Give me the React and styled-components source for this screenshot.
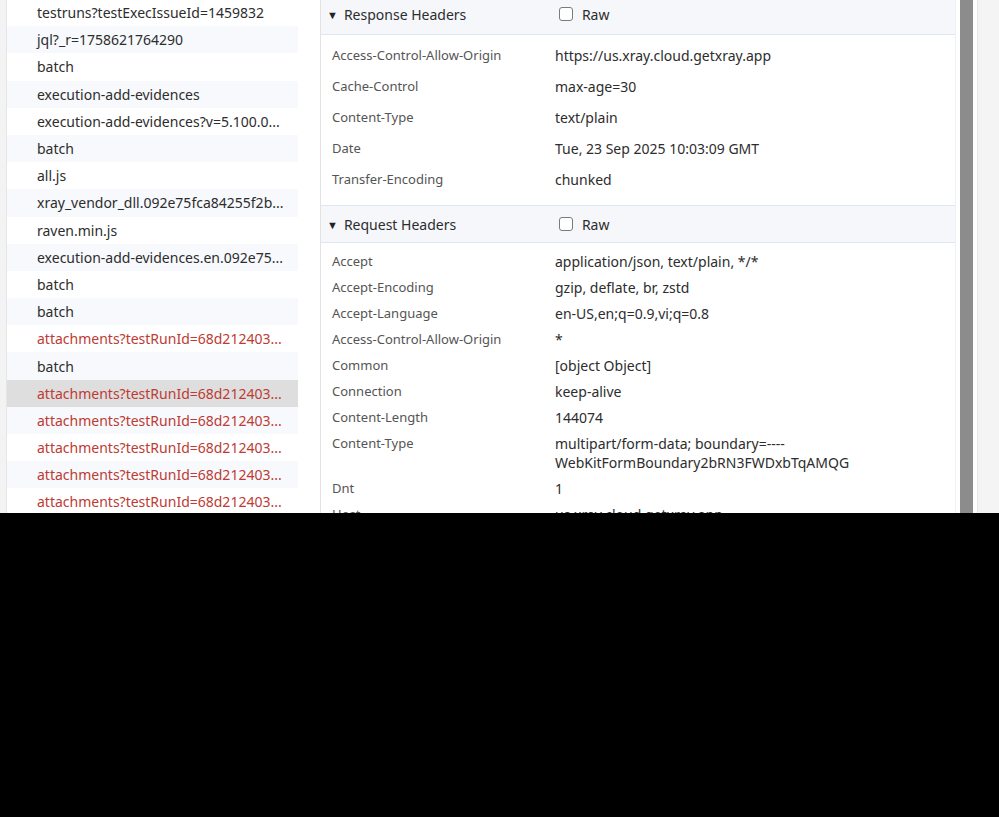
import React from 'react';
import styled, { createGlobalStyle } from 'styled-components';

const Global = createGlobalStyle`
  html, body { margin: 0; padding: 0; background: #000; }
  body { font-family: "Noto Sans", "Open Sans", sans-serif; }
  * { box-sizing: border-box; }
`;

const Page = styled.div`
  width: 999px;
  height: 817px;
  background: #000;
`;

const Window = styled.div`
  height: 513px;
  display: flex;
  background: #fff;
  overflow: hidden;
`;

const Gutter = styled.div`
  width: 7px;
  background: #f3f3f3;
  border-right: 1px solid #e6e6e6;
`;

const List = styled.div`
  width: 291px;
  display: flex;
  flex-direction: column;
  margin-top: -1px;
`;

const Row = styled.div`
  height: 27.2px;
  flex-shrink: 0;
  display: flex;
  align-items: center;
  padding-left: 30px;
  font-size: 14px;
  white-space: nowrap;
  overflow: hidden;
  color: ${p => (p.$error ? '#bd3b33' : '#2d2d2d')};
  background: ${p => (p.$selected ? '#dedede' : p.$striped ? '#f7f9fc' : '#fff')};
`;

const Spacer = styled.div`
  width: 22px;
`;

const Detail = styled.div`
  width: 636px;
  border-left: 1px solid #e3e3e3;
  border-right: 1px solid #eef1f5;
  display: flex;
  flex-direction: column;
`;

const SectionHead = styled.div`
  height: ${p => p.$h}px;
  flex-shrink: 0;
  display: flex;
  align-items: center;
  padding-left: 6px;
  padding-bottom: ${p => p.$pb || 0}px;
  background: #f5f7fb;
  border-bottom: 1px solid #dfe6ef;
  font-size: 14px;
  color: #2d2d2d;
`;

const Caret = styled.span`
  font-size: 11px;
  margin-right: 6px;
  color: #222;
`;

const HeadTitle = styled.span`
  width: 215px;
`;

const Check = styled.span`
  width: 14px;
  height: 14px;
  border: 1px solid #7a7a7a;
  border-radius: 3px;
  margin-right: 9px;
  background: #fff;
`;

const Table = styled.div`
  display: flex;
  flex-direction: column;
  padding: ${p => p.$pad};
  border-bottom: ${p => (p.$last ? 'none' : '1px solid #dfe6ef')};
`;

const Line = styled.div`
  display: flex;
  padding: ${p => p.$py}px 0;
  line-height: 19px;
`;

const Name = styled.div`
  width: 234px;
  padding-left: 11px;
  flex-shrink: 0;
  font-size: 13px;
  color: #555;
`;

const Value = styled.div`
  font-size: 14px;
  color: #2d2d2d;
  white-space: pre-line;
`;

const Scroll = styled.div`
  width: 4px;
`;

const Thumb = styled.div`
  width: 13px;
  background: #8c8c8c;
`;

const Side = styled.div`
  flex: 1;
  margin-left: 4px;
  background: #f4f4f4;
  border-left: 1px solid #e8e8e8;
`;

const requests = [
  { t: 'testruns?testExecIssueId=1459832' },
  { t: 'jql?_r=1758621764290' },
  { t: 'batch' },
  { t: 'execution-add-evidences' },
  { t: 'execution-add-evidences?v=5.100.0...' },
  { t: 'batch' },
  { t: 'all.js' },
  { t: 'xray_vendor_dll.092e75fca84255f2b...' },
  { t: 'raven.min.js' },
  { t: 'execution-add-evidences.en.092e75...' },
  { t: 'batch' },
  { t: 'batch' },
  { t: 'attachments?testRunId=68d212403...', err: true },
  { t: 'batch' },
  { t: 'attachments?testRunId=68d212403...', err: true, sel: true },
  { t: 'attachments?testRunId=68d212403...', err: true },
  { t: 'attachments?testRunId=68d212403...', err: true },
  { t: 'attachments?testRunId=68d212403...', err: true },
  { t: 'attachments?testRunId=68d212403...', err: true },
];

const responseHeaders = [
  ['Access-Control-Allow-Origin', 'https://us.xray.cloud.getxray.app'],
  ['Cache-Control', 'max-age=30'],
  ['Content-Type', 'text/plain'],
  ['Date', 'Tue, 23 Sep 2025 10:03:09 GMT'],
  ['Transfer-Encoding', 'chunked'],
];

const requestHeaders = [
  ['Accept', 'application/json, text/plain, */*'],
  ['Accept-Encoding', 'gzip, deflate, br, zstd'],
  ['Accept-Language', 'en-US,en;q=0.9,vi;q=0.8'],
  ['Access-Control-Allow-Origin', '*'],
  ['Common', '[object Object]'],
  ['Connection', 'keep-alive'],
  ['Content-Length', '144074'],
  ['Content-Type', 'multipart/form-data; boundary=----\nWebKitFormBoundary2bRN3FWDxbTqAMQG'],
  ['Dnt', '1'],
  ['Host', 'us.xray.cloud.getxray.app'],
];

const Section = ({ title, h, pb }) => (
  <SectionHead $h={h} $pb={pb}>
    <Caret>▼</Caret>
    <HeadTitle>{title}</HeadTitle>
    <Check />
    Raw
  </SectionHead>
);

const App = () => (
  <Page>
    <Global />
    <Window>
      <Gutter />
      <List>
        {requests.map((r, i) => (
          <Row key={i} $error={r.err} $selected={r.sel} $striped={i % 2 === 1}>
            {r.t}
          </Row>
        ))}
      </List>
      <Spacer />
      <Detail>
        <Section title="Response Headers" h={35} pb={6} />
        <Table $pad="5px 0 10px">
          {responseHeaders.map(([n, v]) => (
            <Line key={n} $py={6}>
              <Name>{n}</Name>
              <Value>{v}</Value>
            </Line>
          ))}
        </Table>
        <Section title="Request Headers" h={37} />
        <Table $pad="5px 0 0" $last>
          {requestHeaders.map(([n, v], i) => (
            <Line key={i} $py={3.5}>
              <Name>{n}</Name>
              <Value>{v}</Value>
            </Line>
          ))}
        </Table>
      </Detail>
      <Scroll />
      <Thumb />
      <Side />
    </Window>
  </Page>
);

export default App;
